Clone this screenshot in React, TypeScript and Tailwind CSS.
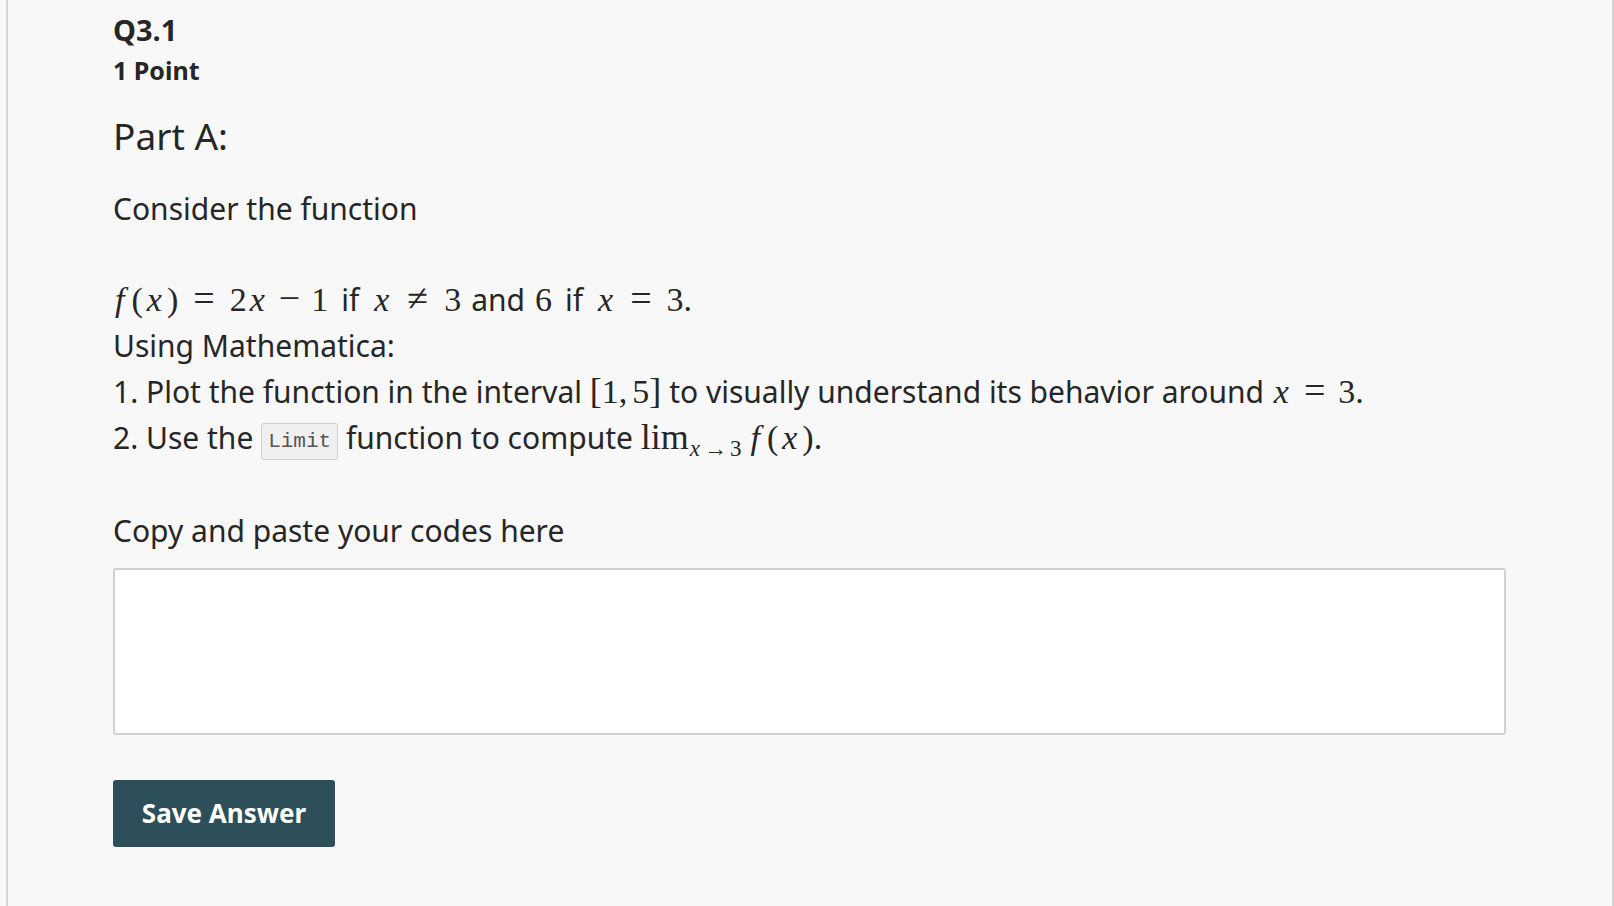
import React from "react";

const sans = { fontFamily: '"Noto Sans", "Open Sans", sans-serif' };

// math bits, serif in place of KaTeX
function M({ children, i, cls = "" }: { children: React.ReactNode; i?: boolean; cls?: string }) {
    return (
        <span className={`font-['Liberation_Serif',serif] text-[34px] leading-none ${i ? "italic" : ""} ${cls}`}>
            {children}
        </span>
    );
}

// relation / operator sign, a bit bigger and spaced like TeX
function Rel({ children, cls = "mx-[15px]" }: { children: React.ReactNode; cls?: string }) {
    return (
        <span className={`font-['Liberation_Serif',serif] text-[38px] leading-none ${cls}`}>{children}</span>
    );
}

function FX({ dot }: { dot?: boolean }) {
    return (
        <>
            <M i cls="pl-[2px] pr-[7px]">f</M>
            <M cls="pr-[2px]">(</M>
            <M i cls="px-[2px]">x</M>
            <M cls="pl-[3px]">{dot ? ")." : ")"}</M>
        </>
    );
}

export default function App() {
    return (
        <div className="min-h-screen bg-[#f8f8f8] text-[#262626] font-['Noto_Sans',sans-serif]" style={sans}>
            <div className="ml-[6px] min-h-[906px] border-l-2 border-r-2 border-[#d4d4d4] pl-[105px] pr-[106px] pt-[12px]">
                <h2 className="text-[29px] leading-[36px] font-bold">Q3.1</h2>
                <div className="mt-[6px] text-[25px] leading-[32px] font-bold">1 Point</div>

                <h3 className="mt-[28px] text-[37px] leading-[44px] font-normal">Part A:</h3>

                <div className="text-[30px] leading-[46px]">
                    <p className="mt-[28px]">Consider the function</p>

                    <div className="mt-[45px]">
                        <div>
                            <FX />
                            <Rel>=</Rel>
                            <M>2</M>
                            <M i cls="px-[3px]">x</M>
                            <Rel cls="mx-[11px]">−</Rel>
                            <M>1</M>
                            <span className="mx-[13px]">if</span>
                            <M i cls="px-[2px]">x</M>
                            <Rel cls="mx-[16px]">≠</Rel>
                            <M>3</M>
                            <span className="mx-[10px]">and</span>
                            <M>6</M>
                            <span className="mx-[13px]">if</span>
                            <M i cls="px-[2px]">x</M>
                            <Rel>=</Rel>
                            <M>3.</M>
                        </div>
                        <div>Using Mathematica:</div>
                        <div>
                            1. Plot the function in the interval{" "}
                            <M cls="text-[36px]">[</M>
                            <M>1,</M>
                            <M cls="ml-[5px]">5</M>
                            <M cls="text-[36px]">]</M> to visually understand its behavior around{" "}
                            <M i cls="px-[2px]">x</M>
                            <Rel cls="mx-[13px]">=</Rel>
                            <M>3.</M>
                        </div>
                        <div>
                            2. Use the{" "}
                            <code className="inline-block align-[2px] h-[37px] px-[6px] rounded-[3px] border border-[#cfcfcf] bg-[#f0f0f0] text-[#555] text-[21px] leading-[35px] font-['Liberation_Mono',monospace]">
                                Limit
                            </code>{" "}
                            function to compute <M cls="text-[36px]">lim</M>
                            <span className="font-['Liberation_Serif',serif] text-[23px] leading-none relative top-[7px]">
                                <i className="px-[1px]">x</i>
                                <span className="mx-[3px]">→</span>3
                            </span>
                            <span className="ml-[7px]" />
                            <FX dot />
                        </div>
                    </div>

                    <p className="mt-[47px]">Copy and paste your codes here</p>
                </div>

                <textarea className="mt-[14px] block w-[1393px] h-[167px] resize-none rounded-[3px] border-2 border-[#d1d1d1] bg-white p-3 text-[24px] outline-none" />

                <button className="mt-[45px] block w-[222px] h-[67px] rounded-[3px] bg-[#2c4f59] text-white text-[26px] font-bold">
                    Save Answer
                </button>
            </div>
        </div>
    );
}
